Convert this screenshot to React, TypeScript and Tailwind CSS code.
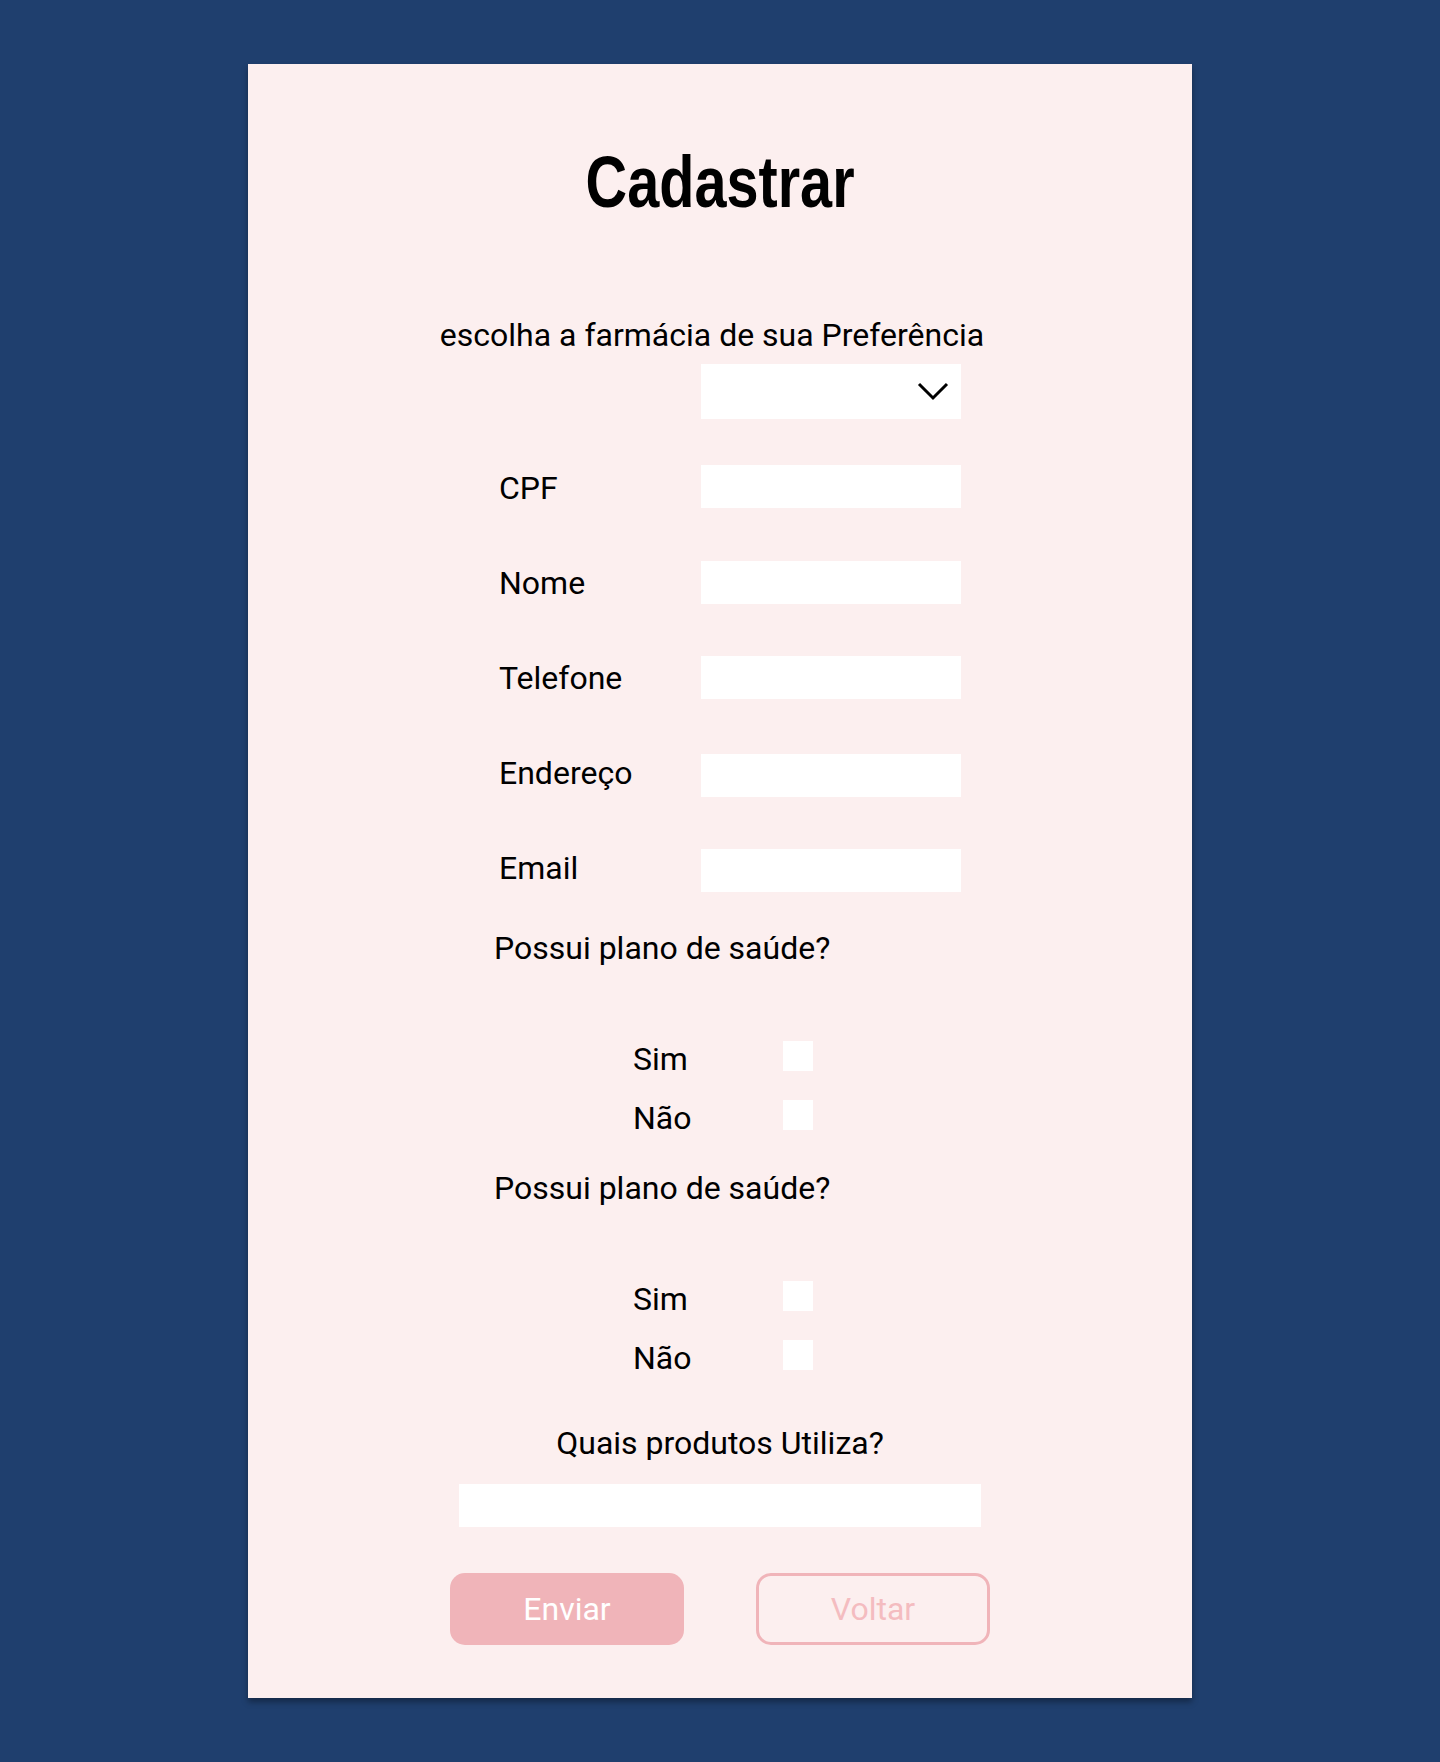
import React from "react";

const rows: { label: string; off: string }[] = [
  { label: "CPF", off: "-mt-[4px]" },
  { label: "Nome", off: "-mt-[3px]" },
  { label: "Telefone", off: "-mt-[3px]" },
  { label: "Endereço", off: "mt-0" },
  { label: "Email", off: "mt-0" },
];

function YesNo({ first }: { first: boolean }) {
  return (
    <div>
      <p className={`${first ? "mt-[42px]" : "mt-[32px]"} pl-[246px] text-[32px] leading-[38px]`}>
        Possui plano de saúde?
      </p>
      <div className="mt-[73px] flex items-start pl-[385px]">
        <span className="w-[150px] text-[32px] leading-[38px]">Sim</span>
        <input type="checkbox" className="mt-px h-[30px] w-[30px] appearance-none bg-white" />
      </div>
      <div className="mt-[21px] flex items-start pl-[385px]">
        <span className="w-[150px] text-[32px] leading-[38px]">Não</span>
        <input type="checkbox" className="mt-px h-[30px] w-[30px] appearance-none bg-white" />
      </div>
    </div>
  );
}

export default function App() {
  return (
    <div className="min-h-[1762px] bg-[#1f3f6e] pt-[64px] pb-[65px] font-['Roboto','Liberation_Sans',sans-serif] text-black">
      <div className="mx-auto w-[944px] bg-[#fcefef] pt-[78px] pb-[53px] shadow-[0_4px_6px_rgba(0,0,0,0.35)]">
        <h1 className="text-center font-['Liberation_Sans',sans-serif] text-[72px] font-bold leading-[80px]">
          <span className="inline-block scale-x-80">Cadastrar</span>
        </h1>

        <p className="mt-[94px] pr-[16px] text-center text-[32px] leading-[38px]">
          escolha a farmácia de sua Preferência
        </p>

        <div className="mt-[10px] pl-[453px]">
          <div className="relative h-[55px] w-[260px] bg-white">
            <select className="h-full w-full appearance-none bg-transparent outline-none" aria-label="farmácia">
              <option value=""></option>
            </select>
            <svg
              className="pointer-events-none absolute right-[12px] top-[17px]"
              width="32"
              height="20"
              viewBox="0 0 32 20"
              fill="none"
            >
              <polyline points="2,3 16,17 30,3" stroke="#000" strokeWidth="3" />
            </svg>
          </div>
        </div>

        <div className="mt-[50px] flex flex-col gap-[57px] pl-[251px]">
          {rows.map((r) => (
            <div key={r.label} className="flex h-[38px] items-start">
              <label className="w-[202px] text-[32px] leading-[38px]">{r.label}</label>
              <input type="text" className={`${r.off} h-[43px] w-[260px] shrink-0 bg-white outline-none`} />
            </div>
          ))}
        </div>

        <YesNo first={true} />
        <YesNo first={false} />

        <p className="mt-[47px] text-center text-[32px] leading-[38px]">Quais produtos Utiliza?</p>
        <div className="mt-[22px] flex justify-center">
          <input type="text" className="h-[43px] w-[522px] bg-white outline-none" />
        </div>

        <div className="mt-[46px] flex justify-center gap-[72px]">
          <button className="h-[72px] w-[234px] rounded-[15px] bg-[#f0b4b9] text-[32px] leading-[38px] text-white">
            Enviar
          </button>
          <button className="h-[72px] w-[234px] rounded-[15px] border-[3px] border-[#f0b4b9] text-[32px] leading-[38px] text-[#f4bcc0]">
            Voltar
          </button>
        </div>
      </div>
    </div>
  );
}
